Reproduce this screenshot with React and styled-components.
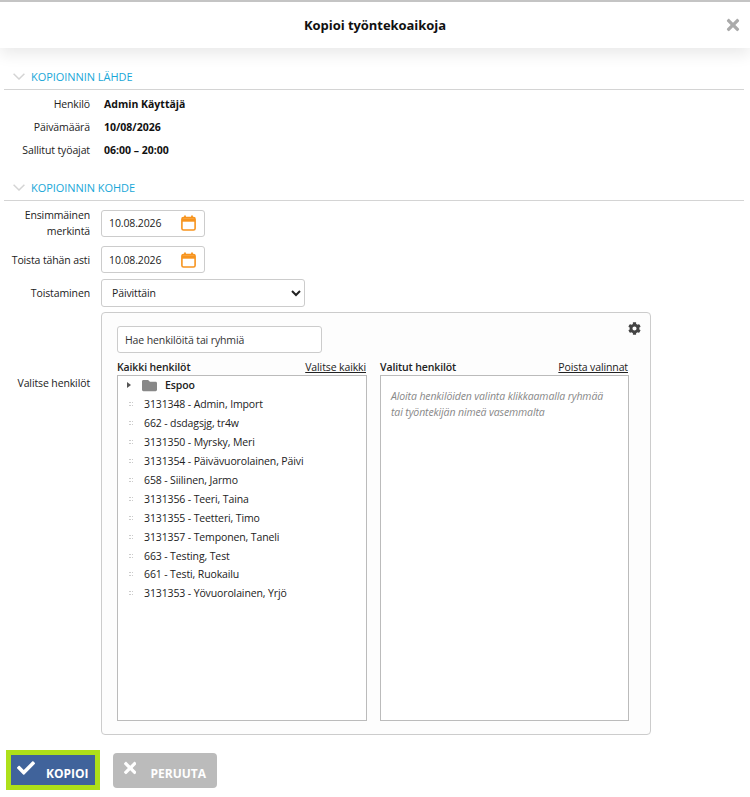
import React from "react";
import styled, { createGlobalStyle } from "styled-components";
import { FaCheck, FaTimes, FaCog, FaFolder } from "react-icons/fa";

const GlobalStyle = createGlobalStyle`
    html, body {
        margin: 0;
        padding: 0;
        background: #fff;
    }
    body {
        font-family: "Open Sans", "Noto Sans", sans-serif;
        font-size: 10.5px;
        letter-spacing: -0.12px;
        color: #222;
    }
`;

const PERSONS = [
    "3131348 - Admin, Import",
    "662 - dsdagsjg, tr4w",
    "3131350 - Myrsky, Meri",
    "3131354 - Päivävuorolainen, Päivi",
    "658 - Siilinen, Jarmo",
    "3131356 - Teeri, Taina",
    "3131355 - Teetteri, Timo",
    "3131357 - Temponen, Taneli",
    "663 - Testing, Test",
    "661 - Testi, Ruokailu",
    "3131353 - Yövuorolainen, Yrjö",
];

const Chevron = () => (
    <svg width="12" height="7" viewBox="0 0 12 7" fill="none" stroke="#d4d4d4" strokeWidth="1.5">
        <path d="M.6 .8L6 6l5.4-5.2" />
    </svg>
);

const CalendarIcon = () => (
    <svg width="15" height="16" viewBox="0 0 15 16" fill="none" stroke="#f7941e" strokeWidth="1.6">
        <rect x=".9" y="2.6" width="13.2" height="12.4" rx="1.6" />
        <path d="M1 5h13" strokeWidth="3.4" />
        <path d="M4 .4v2.4M11 .4v2.4" strokeWidth="1.8" />
    </svg>
);

const App = () => {
    return (
        <Page>
            <GlobalStyle />
            <Header>
                <Title>Kopioi työntekoaikoja</Title>
                <CloseButton><FaTimes /></CloseButton>
            </Header>

            <Section>
                <SectionTitle><Chevron /><span>KOPIOINNIN LÄHDE</span></SectionTitle>
                <InfoRow><Label>Henkilö</Label><Value>Admin Käyttäjä</Value></InfoRow>
                <InfoRow><Label>Päivämäärä</Label><Value>10/08/2026</Value></InfoRow>
                <InfoRow><Label>Sallitut työajat</Label><Value>06:00 – 20:00</Value></InfoRow>
            </Section>

            <Section $second>
                <SectionTitle><Chevron /><span>KOPIOINNIN KOHDE</span></SectionTitle>
                <FormRow $top={6}>
                    <FieldLabel>Ensimmäinen merkintä</FieldLabel>
                    <DateField><span>10.08.2026</span><CalendarIcon /></DateField>
                </FormRow>
                <FormRow $top={7}>
                    <FieldLabel>Toista tähän asti</FieldLabel>
                    <DateField><span>10.08.2026</span><CalendarIcon /></DateField>
                </FormRow>
                <FormRow $top={6}>
                    <FieldLabel>Toistaminen</FieldLabel>
                    <Select defaultValue="daily">
                        <option value="daily">Päivittäin</option>
                    </Select>
                </FormRow>
                <FormRow $top={5}>
                    <FieldLabel $panel>Valitse henkilöt</FieldLabel>
                    <Panel>
                        <GearButton><FaCog /></GearButton>
                        <SearchInput placeholder="Hae henkilöitä tai ryhmiä" />
                        <Lists>
                            <ListColumn>
                                <ListHead>
                                    <ListTitle>Kaikki henkilöt</ListTitle>
                                    <ListLink>Valitse kaikki</ListLink>
                                </ListHead>
                                <ListBox>
                                    <GroupRow>
                                        <Caret />
                                        <FolderIcon><FaFolder /></FolderIcon>
                                        <GroupName>Espoo</GroupName>
                                    </GroupRow>
                                    {PERSONS.map((name) => (
                                        <PersonRow key={name}>
                                            <TreeDots />
                                            <span>{name}</span>
                                        </PersonRow>
                                    ))}
                                </ListBox>
                            </ListColumn>
                            <ListColumn>
                                <ListHead>
                                    <ListTitle>Valitut henkilöt</ListTitle>
                                    <ListLink>Poista valinnat</ListLink>
                                </ListHead>
                                <ListBox>
                                    <Hint>Aloita henkilöiden valinta klikkaamalla ryhmää tai työntekijän nimeä vasemmalta</Hint>
                                </ListBox>
                            </ListColumn>
                        </Lists>
                    </Panel>
                </FormRow>
            </Section>

            <Footer>
                <PrimaryButton><FaCheck /><span>KOPIOI</span></PrimaryButton>
                <CancelButton><FaTimes /><span>PERUUTA</span></CancelButton>
            </Footer>
        </Page>
    );
};

const Page = styled.div`
    width: 750px;
    height: 797px;
    overflow: hidden;
    border-top: 2px solid #c4c4c4;
    box-sizing: border-box;
`;

const Header = styled.header`
    height: 46px;
    display: flex;
    align-items: center;
    justify-content: center;
    position: relative;
    background: #fff;
    box-shadow: 0 6px 16px rgba(0, 0, 0, 0.09);
`;

const Title = styled.h1`
    margin: 0;
    font-size: 13px;
    font-weight: 700;
    letter-spacing: -0.05px;
    color: #111;
`;

const CloseButton = styled.span`
    position: absolute;
    right: 8px;
    top: 14px;
    display: flex;
    font-size: 18px;
    color: #aaa;
`;

const Section = styled.section`
    padding: ${(p) => (p.$second ? "15px" : "17px")} 6px 0 4px;
`;

const SectionTitle = styled.h2`
    margin: 0 0 2px;
    height: 25px;
    box-sizing: border-box;
    padding: 0 0 2px 9px;
    display: flex;
    align-items: center;
    gap: 6px;
    font-size: 11px;
    font-weight: 400;
    letter-spacing: -0.05px;
    color: #19a7d8;
    border-bottom: 1px solid #d4d4d4;
`;

const InfoRow = styled.div`
    display: grid;
    grid-template-columns: 86px 1fr;
    column-gap: 14px;
    height: 23px;
    align-items: center;
`;

const Label = styled.div`
    text-align: right;
`;

const Value = styled.div`
    font-weight: 700;
    letter-spacing: 0;
    color: #111;
`;

const FormRow = styled.div`
    display: grid;
    grid-template-columns: 86px 1fr;
    column-gap: 11px;
    align-items: center;
    margin-top: ${(p) => p.$top}px;
`;

const FieldLabel = styled.div`
    text-align: right;
    line-height: 16px;
    align-self: ${(p) => (p.$panel ? "start" : "center")};
    padding-top: ${(p) => (p.$panel ? "63px" : "0")};
`;

const DateField = styled.div`
    width: 104px;
    height: 27px;
    box-sizing: border-box;
    padding: 0 8px 0 7px;
    border: 1px solid #ccc;
    border-radius: 3px;
    display: flex;
    align-items: center;
    justify-content: space-between;
`;

const Select = styled.select`
    width: 204px;
    height: 28px;
    padding: 0 6px;
    border: 1px solid #ccc;
    border-radius: 3px;
    background: #fff;
    font: inherit;
    letter-spacing: inherit;
    color: inherit;
`;

const Panel = styled.div`
    width: 550px;
    height: 423px;
    box-sizing: border-box;
    padding: 13px 21px 13px 15px;
    border: 1px solid #ccc;
    border-radius: 4px;
    background: #fdfdfd;
    position: relative;
`;

const GearButton = styled.span`
    position: absolute;
    top: 9px;
    right: 9px;
    display: flex;
    font-size: 13px;
    color: #444;
`;

const SearchInput = styled.input`
    display: block;
    width: 205px;
    height: 27px;
    box-sizing: border-box;
    padding: 0 7px;
    border: 1px solid #ccc;
    border-radius: 3px;
    font: inherit;
    letter-spacing: inherit;
    &::placeholder {
        color: #333;
        opacity: 1;
    }
`;

const Lists = styled.div`
    display: grid;
    grid-template-columns: 250px 249px;
    column-gap: 13px;
    margin-top: 7px;
`;

const ListColumn = styled.div`
    display: flex;
    flex-direction: column;
`;

const ListHead = styled.div`
    display: flex;
    justify-content: space-between;
    align-items: flex-end;
    height: 14px;
    padding: 0 1px 1px 0;
`;

const ListTitle = styled.span`
    font-weight: 600;
    color: #222;
`;

const ListLink = styled.span`
    text-decoration: underline;
`;

const ListBox = styled.div`
    height: 346px;
    box-sizing: border-box;
    border: 1px solid #bbb;
    background: #fff;
`;

const GroupRow = styled.div`
    display: flex;
    align-items: center;
    height: 18px;
    margin-bottom: 1px;
    padding-left: 9px;
`;

const Caret = styled.span`
    width: 0;
    height: 0;
    border-left: 4px solid #555;
    border-top: 3px solid transparent;
    border-bottom: 3px solid transparent;
`;

const FolderIcon = styled.span`
    display: flex;
    margin-left: 11px;
    font-size: 15px;
    color: #888;
`;

const GroupName = styled.span`
    margin-left: 8px;
    font-weight: 600;
`;

const PersonRow = styled.div`
    display: flex;
    align-items: center;
    height: 18.9px;
    padding-left: 11px;
    gap: 11px;
`;

const TreeDots = styled.span`
    width: 4px;
    height: 2px;
    border-top: 1px dotted #ccc;
    border-bottom: 1px dotted #ccc;
`;

const Hint = styled.p`
    margin: 0;
    padding: 12px 16px 0 10px;
    font-style: italic;
    line-height: 16px;
    color: #888;
`;

const Footer = styled.div`
    display: flex;
    align-items: center;
    gap: 13px;
    padding: 15px 0 0 6px;
`;

const PrimaryButton = styled.button`
    width: 94px;
    height: 40px;
    box-sizing: border-box;
    border: 5px solid #aee01a;
    background: #40639b;
    color: #fff;
    font: 700 12px "Open Sans", sans-serif;
    display: flex;
    align-items: center;
    gap: 11px;
    padding: 0 6px;
    & svg {
        font-size: 18px;
        margin-top: -4px;
    }
    & span {
        padding-top: 6px;
    }
`;

const CancelButton = styled.button`
    width: 104px;
    height: 35px;
    box-sizing: border-box;
    border: none;
    border-radius: 4px;
    background: #bbb;
    color: #fff;
    font: 700 12px "Open Sans", sans-serif;
    display: flex;
    align-items: center;
    gap: 14px;
    padding: 0 11px;
    & svg {
        font-size: 18px;
        margin-top: -4px;
    }
    & span {
        padding-top: 6px;
    }
`;

export default App;
